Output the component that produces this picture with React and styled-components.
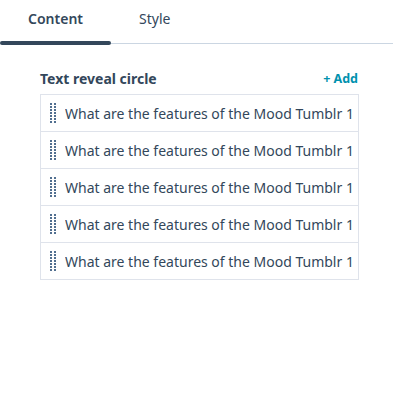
import React from "react";
import styled, { createGlobalStyle } from "styled-components";

const GlobalStyle = createGlobalStyle`
  body {
    margin: 0;
    background: #ffffff;
    font-family: "Noto Sans", "Open Sans", sans-serif;
    color: #33475b;
  }
`;

const Page = styled.div`
  width: 393px;
  height: 403px;
  background: #ffffff;
`;

const TabBar = styled.div`
  display: flex;
  height: 44px;
  border-bottom: 1px solid #cbd6e2;
  box-sizing: border-box;
`;

const Tab = styled.div`
  position: relative;
  padding: 0 28px;
  height: 100%;
  display: flex;
  align-items: center;
  padding-bottom: 6px;
  box-sizing: border-box;
  font-size: 14px;
  font-weight: ${({ active }) => (active ? 600 : 400)};
  color: #33475b;

  &::after {
    content: "";
    display: ${({ active }) => (active ? "block" : "none")};
    position: absolute;
    left: 0;
    right: 0;
    bottom: -2px;
    height: 4px;
    border-radius: 2px;
    background: #33475b;
  }
`;

const Section = styled.div`
  padding: 25px 34px 0 40px;
`;

const Header = styled.div`
  display: flex;
  justify-content: space-between;
  align-items: center;
  height: 18px;
  margin-bottom: 7px;
`;

const Title = styled.div`
  font-size: 14px;
  font-weight: 700;
  color: #33475b;
`;

const AddButton = styled.div`
  font-size: 12.5px;
  font-weight: 700;
  color: #0091ae;
  padding-right: 1px;
`;

const List = styled.div`
  border: 1px solid #dfe3eb;
  border-bottom: none;
`;

const Row = styled.div`
  display: flex;
  align-items: center;
  height: 36px;
  border-bottom: 1px solid #dfe3eb;
  padding-left: 9px;
  gap: 9px;
  overflow: hidden;
`;

/* two columns of small square dots */
const Handle = styled.div`
  width: 6px;
  height: 21px;
  flex-shrink: 0;
  background-image: linear-gradient(to bottom, #516f90 0 2px, transparent 2px 3px);
  background-size: 6px 3px;
  -webkit-mask-image: linear-gradient(to right, #000 0 2px, transparent 2px 4px, #000 4px 6px);
  mask-image: linear-gradient(to right, #000 0 2px, transparent 2px 4px, #000 4px 6px);
`;

const RowText = styled.div`
  font-size: 14px;
  color: #33475b;
  white-space: nowrap;
  overflow: hidden;
`;

const items = Array.from({ length: 5 }, () => "What are the features of the Mood Tumblr 1");

export default function App() {
  return (
    <Page>
      <GlobalStyle />
      <TabBar>
        <Tab active>Content</Tab>
        <Tab>Style</Tab>
      </TabBar>
      <Section>
        <Header>
          <Title>Text reveal circle</Title>
          <AddButton>+ Add</AddButton>
        </Header>
        <List>
          {items.map((text, i) => (
            <Row key={i}>
              <Handle />
              <RowText>{text}</RowText>
            </Row>
          ))}
        </List>
      </Section>
    </Page>
  );
}
